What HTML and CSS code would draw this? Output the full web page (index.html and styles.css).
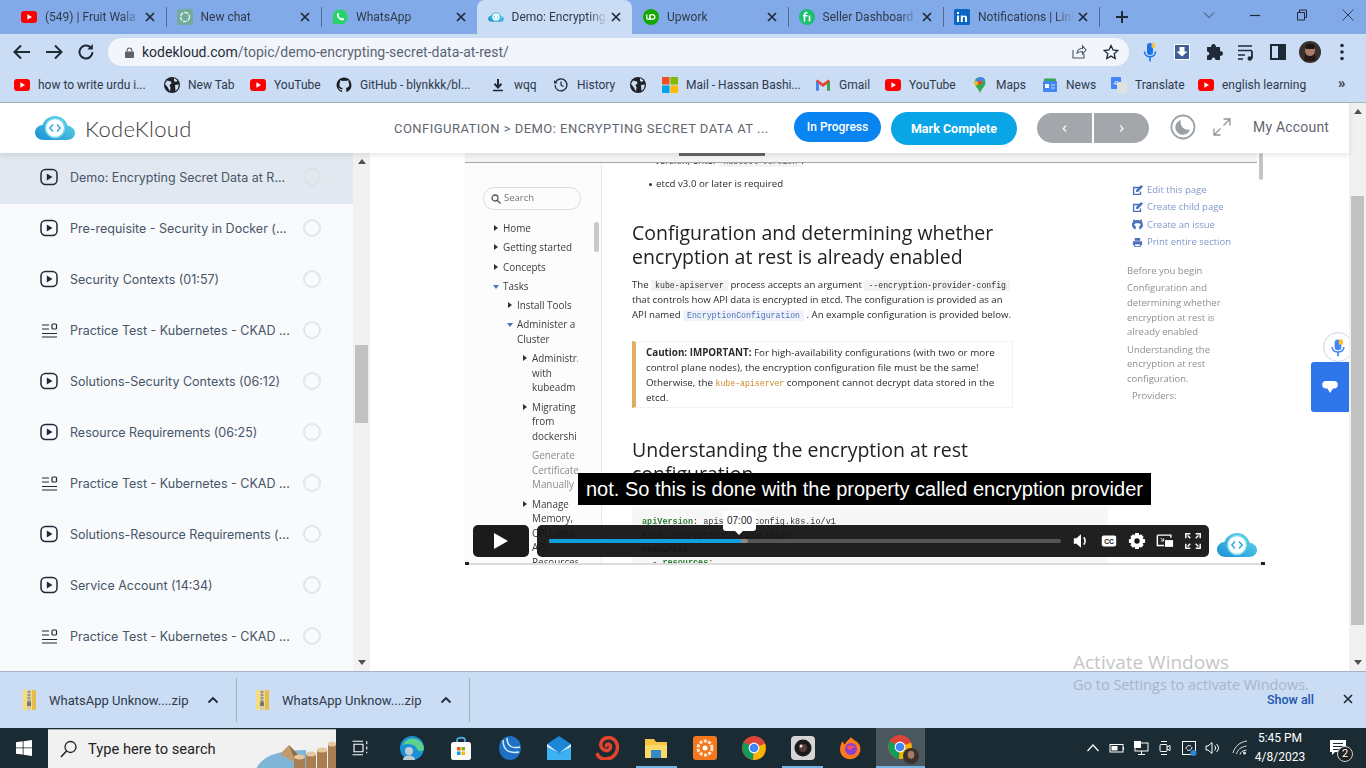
FILE: index.html
```html
<!DOCTYPE html>
<html lang="en">
<head>
<meta charset="utf-8">
<title>Demo: Encrypting Secret Data at Rest</title>
<link rel="stylesheet" href="styles.css">
</head>
<body>
<svg class="defs" aria-hidden="true">
  <symbol id="yt" viewBox="0 0 16 16"><rect x="0" y="2" width="16" height="12" rx="3.2" fill="#f00"/><path d="M6.4 5.3v5.4L11 8z" fill="#fff"/></symbol>
  <symbol id="globe" viewBox="0 0 16 16"><circle cx="8" cy="8" r="8" fill="#202124"/><path d="M3 3.5l4 1 .5 2-2 1.500 1 2.500-.5 4L3.500 10 1 7zM10 1l3.500 2.500-1.500 1.500-2-1zM11 8l3.800-.5-.8 4-2.500 2.500z" fill="#cbdcf5"/></symbol>
  <symbol id="cloud" viewBox="0 0 40 24"><defs><linearGradient id="cg" x1="0" y1="1" x2="1" y2="0"><stop offset="0" stop-color="#1a8fd8"/><stop offset="1" stop-color="#62dbe8"/></linearGradient></defs><path d="M9 24C3.500 24 0 20.500 0 16.500S3 9.500 7.500 9C9.500 3.500 14.500 0 20 0c6 0 11 4 12.500 9.500C37 10.500 40 13.500 40 17s-3 7-8 7z" fill="url(#cg)"/><circle cx="20" cy="12" r="9.500" fill="#fff" stroke="#7fdbe9" stroke-width="1.500"/><path d="M18 8.500L14.800 12l3.200 3.500M22 8.500l3.200 3.500-3.200 3.500" fill="none" stroke="#27a5dd" stroke-width="1.400"/></symbol>
  <symbol id="play" viewBox="0 0 18 18"><rect x="1" y="1.500" width="16" height="15" rx="4.500" fill="none" stroke="#1e293b" stroke-width="1.500"/><path d="M6.800 5.500v7L12.500 9z" fill="#1e293b"/></symbol>
  <symbol id="test" viewBox="0 0 18 18"><path d="M2 4h7M2 8h7M2 12.500h15M2 16h15" stroke="#1e293b" stroke-width="1.200" fill="none"/><rect x="12" y="3" width="4.500" height="5" rx="1" fill="none" stroke="#1e293b" stroke-width="1.200"/></symbol>
  <symbol id="x" viewBox="0 0 10 10"><path d="M1 1l8 8M9 1l-8 8" stroke="#1f2a36" stroke-width="1.700" fill="none"/></symbol>
  <symbol id="zip" viewBox="0 0 15 20"><path d="M1 0h13v20H1z" fill="#f6dc7c"/><path d="M10 0h4v20h-4z" fill="#e6bd4a"/><path d="M5.500 0h3v20h-3z" fill="#c9c9c0"/><path d="M5.500 2h3M5.500 5h3M5.500 8h3M5.500 11h3" stroke="#666" stroke-width="1"/><rect x="5" y="12" width="4" height="4" fill="#777"/></symbol>
  <symbol id="chrome" viewBox="0 0 24 24"><circle cx="12" cy="12" r="12" fill="#db4437"/><path d="M12 12L1.600 6C-.6 11 .2 17 4 20.500c2 1.800 4.300 3 7 3.500z" fill="#0f9d58"/><path d="M12 12l11-4.500c1.800 5.500.5 11-3.800 14.300-2.300 1.700-5 2.300-8.200 2.200z" fill="#f4b400"/><circle cx="12" cy="12" r="5.400" fill="#fff"/><circle cx="12" cy="12" r="4.300" fill="#4285f4"/></symbol>
  <symbol id="edit" viewBox="0 0 12 12"><path d="M1 2h7v1.500H2.500v6h6V7H10v4H1z" fill="#4d72bd"/><path d="M4.500 5.500L10 0l2 2-5.500 5.500H4.500z" fill="#4d72bd"/></symbol>
</svg>

<header class="tabstrip">
  <div class="tab"><svg class="fav"><use href="#yt"/></svg><span class="tab-t">(549) | Fruit Wala</span><svg class="tab-x"><use href="#x"/></svg></div>
  <div class="tab sep"><svg class="fav" viewBox="0 0 16 16"><rect width="16" height="16" rx="3" fill="#74aa9c"/><circle cx="8" cy="8" r="4.500" fill="none" stroke="#e6f0ee" stroke-width="1.400" stroke-dasharray="4 1"/></svg><span class="tab-t">New chat</span><svg class="tab-x"><use href="#x"/></svg></div>
  <div class="tab sep"><svg class="fav" viewBox="0 0 16 16"><path d="M.5 15.500l1.100-4A7.500 7.500 0 1 1 4.600 14.500z" fill="#25d366"/><path d="M5.500 4.500c-1 1-.8 2.500.5 4.200s3 2.900 4.500 2.800c1 0 1.700-.9 1.700-1.700L10.500 8.700l-.9.900C8.400 9 7 7.700 6.500 6.500l.8-.9-.9-1.800z" fill="#fff"/></svg><span class="tab-t">WhatsApp</span><svg class="tab-x"><use href="#x"/></svg></div>
  <div class="tab tab-on"><svg class="fav"><use href="#cloud"/></svg><span class="tab-t">Demo: Encrypting Secret</span><svg class="tab-x"><use href="#x"/></svg></div>
  <div class="tab"><svg class="fav" viewBox="0 0 16 16"><circle cx="8" cy="8" r="8" fill="#14a800"/><path d="M3.800 5.500v3c0 2.500 3 2.500 3 0v-3M7 11V7c.3-2 4.800-2 4.800 1s-3.800 2.600-4.800 1" fill="none" stroke="#fff" stroke-width="1.300"/></svg><span class="tab-t">Upwork</span><svg class="tab-x"><use href="#x"/></svg></div>
  <div class="tab sep"><svg class="fav" viewBox="0 0 16 16"><circle cx="8" cy="8" r="8" fill="#1dbf73"/><path d="M5.500 12.500V6c0-2 1.500-2.500 3-2.300M4 6.800h4.500M10.500 6.500v6" fill="none" stroke="#fff" stroke-width="1.600"/></svg><span class="tab-t">Seller Dashboard</span><svg class="tab-x"><use href="#x"/></svg></div>
  <div class="tab sep"><svg class="fav" viewBox="0 0 16 16"><rect width="16" height="16" rx="1.500" fill="#0a66c2"/><path d="M3 6.500h2V13H3zM3 3h2v2H3zM6.800 6.500h2v1c1-1.600 4.200-1.600 4.200 1.300V13h-2V9.200c0-1.500-2.200-1.500-2.200 0V13h-2z" fill="#fff"/></svg><span class="tab-t">Notifications | LinkedIn</span><svg class="tab-x"><use href="#x"/></svg></div>
  <div class="newtab sep"><svg class="ic14" viewBox="0 0 14 14"><path d="M7 1v12M1 7h12" stroke="#1f2a36" stroke-width="2" fill="none"/></svg></div>
  <div class="winctl">
    <svg class="ic12" viewBox="0 0 12 12"><path d="M1 3.500L6 8.500l5-5" stroke="#33425a" fill="none"/></svg>
    <svg class="ic12" viewBox="0 0 12 12"><path d="M1 6.500h10" stroke="#1f2a36" fill="none" stroke-width="1.200"/></svg>
    <svg class="ic12" viewBox="0 0 12 12"><path d="M1.500 3.500h7v7.500h-7zM3.500 3.500V1h7v7.500H8.500" stroke="#1f2a36" fill="none"/></svg>
    <svg class="ic12" viewBox="0 0 12 12"><path d="M.5.500l11 11M11.500.500l-11 11" stroke="#33425a" fill="none"/></svg>
  </div>
</header>

<nav class="toolbar">
  <svg class="tb" viewBox="0 0 24 24"><path d="M20 12H5M11 5.500L4.500 12l6.500 6.500" fill="none" stroke="#1f2a36" stroke-width="2"/></svg>
  <svg class="tb" viewBox="0 0 24 24"><path d="M4 12h15M13 5.500l6.500 6.500-6.500 6.500" fill="none" stroke="#1f2a36" stroke-width="2"/></svg>
  <svg class="tb" viewBox="0 0 24 24"><path d="M18.500 12a6.500 6.500 0 1 1-2-4.700" fill="none" stroke="#1f2a36" stroke-width="2"/><path d="M18.800 4v5.500h-5.500z" fill="#1f2a36"/></svg>
  <div class="omni">
    <svg class="lock" viewBox="0 0 10 12"><path d="M2.500 5V3.500a2.500 2.500 0 0 1 5 0V5" fill="none" stroke="#5f6368" stroke-width="1.300"/><rect y="5" width="10" height="7" rx="1" fill="#5f6368"/></svg>
    <span class="url"><b>kodekloud.com</b>/topic/demo-encrypting-secret-data-at-rest/</span>
    <svg class="tb16" viewBox="0 0 16 16"><path d="M2 6v8h11v-4M6 9c.5-3 3-4.500 5.500-4.500V2L15 6l-3.500 4V7.500C9 7.500 7.500 8 6 9z" fill="none" stroke="#4b5563" stroke-width="1.100"/></svg>
    <svg class="tb16" viewBox="0 0 16 16"><path d="M8 1.500l2 4.500 4.800.5-3.600 3.200 1 4.800L8 12.100 3.800 14.500l1-4.800L1.200 6.500 6 6z" fill="none" stroke="#1f2a36" stroke-width="1.300"/></svg>
  </div>
  <div class="tb-right">
    <svg class="tb" viewBox="0 0 24 24"><rect x="9" y="3" width="6" height="12" rx="3" fill="#1a73e8"/><rect x="13.500" y="3" width="3.500" height="5" rx="1.500" fill="#fbc02d"/><path d="M6.500 11.500c0 7 11 7 11 0M12 17.500v4" fill="none" stroke="#1a73e8" stroke-width="1.600"/></svg>
    <svg class="tb" viewBox="0 0 24 24"><rect x="4.500" y="4.500" width="15" height="15" fill="#3f5f95" stroke="#fff"/><path d="M9.500 7h5v4.500H17.500L12 16.500 6.500 11.500h3z" fill="#fff"/></svg>
    <svg class="tb" viewBox="0 0 24 24"><path d="M5 7h4c0-4 5-4 5 0h4v4c4 0 4 5 0 5v4h-4.500c0-3.500-4-3.500-4 0H5v-4.500c3 0 3-4 0-4z" fill="#1f2a36"/></svg>
    <svg class="tb" viewBox="0 0 24 24"><path d="M4 6h14M4 10.500h14M4 15h7M4 19h5" stroke="#1f2a36" stroke-width="1.500" fill="none"/><path d="M18 11v7.500" stroke="#1f2a36" stroke-width="1.800"/><circle cx="15.800" cy="18.500" r="2.300" fill="#1f2a36"/></svg>
    <svg class="tb" viewBox="0 0 24 24"><rect x="5" y="5" width="14" height="14" fill="none" stroke="#1f2a36" stroke-width="2"/><rect x="12" y="5" width="7" height="14" fill="#1f2a36"/></svg>
    <svg class="tb" viewBox="0 0 24 24"><circle cx="12" cy="12" r="11" fill="#3b3230"/><ellipse cx="12" cy="10.500" rx="5" ry="6" fill="#a67c62"/><path d="M7 7c1-4.500 9-4.500 10 0l-1 2H8z" fill="#1c1512"/><path d="M7 13c1 4 9 4 10 0l1 8H6z" fill="#241b19"/></svg>
    <svg class="tb" viewBox="0 0 24 24"><circle cx="12" cy="5.500" r="1.800" fill="#1f2a36"/><circle cx="12" cy="12" r="1.800" fill="#1f2a36"/><circle cx="12" cy="18.500" r="1.800" fill="#1f2a36"/></svg>
  </div>
</nav>

<div class="bookmarks">
  <a class="bm"><svg class="bi"><use href="#yt"/></svg>how to write urdu i...</a>
  <a class="bm"><svg class="bi"><use href="#globe"/></svg>New Tab</a>
  <a class="bm"><svg class="bi"><use href="#yt"/></svg>YouTube</a>
  <a class="bm"><svg class="bi" viewBox="0 0 16 16"><path d="M8 .5a7.500 7.500 0 0 0-2.400 14.600c.4.100.5-.2.500-.4v-1.400c-2.100.5-2.500-1-2.500-1-.4-.9-.9-1.100-.9-1.100-.7-.5.100-.5.100-.5.800.100 1.200.8 1.200.8.700 1.200 1.800.8 2.300.6 0-.5.300-.9.500-1.100-1.700-.2-3.400-.8-3.400-3.700 0-.8.300-1.500.8-2-.1-.2-.3-1 .1-2 0 0 .6-.2 2.100.8a7 7 0 0 1 3.800 0c1.500-1 2.100-.8 2.100-.8.400 1 .2 1.800.1 2 .5.500.8 1.200.8 2 0 2.900-1.700 3.500-3.400 3.700.3.200.5.700.5 1.400v2.100c0 .2.100.5.500.4A7.500 7.500 0 0 0 8 .5z" fill="#1b1f23"/></svg>GitHub - blynkkk/bl...</a>
  <a class="bm"><svg class="bi" viewBox="0 0 16 16"><path d="M8 2v8M4.500 6.800L8 10.500l3.500-3.700" stroke="#1f2a36" stroke-width="2" fill="none"/><path d="M3 13.500h10" stroke="#1f2a36" stroke-width="1.500"/></svg>wqq</a>
  <a class="bm"><svg class="bi" viewBox="0 0 16 16"><path d="M2.500 5.500A6 6 0 1 1 2 8" fill="none" stroke="#1f2a36" stroke-width="1.300"/><path d="M1 3v3.500h3.500z" fill="#1f2a36"/><path d="M8 4.500V8l2.500 1.500" fill="none" stroke="#1f2a36" stroke-width="1.200"/></svg>History</a>
  <a class="bm"><svg class="bi"><use href="#globe"/></svg></a>
  <a class="bm"><svg class="bi" viewBox="0 0 16 16"><rect width="7.500" height="7.500" fill="#f25022"/><rect x="8.500" width="7.500" height="7.500" fill="#7fba00"/><rect y="8.500" width="7.500" height="7.500" fill="#00a4ef"/><rect x="8.500" y="8.500" width="7.500" height="7.500" fill="#ffb900"/></svg>Mail - Hassan Bashi...</a>
  <a class="bm"><svg class="bi" viewBox="0 0 16 16"><path d="M1 4v9.500h3V7l4 3 4-3v6.500h3V4l-1.500-1.500L8 6.500 2.500 2.500z" fill="#ea4335"/><path d="M1 4v9.500h3V7z" fill="#4285f4"/><path d="M15 4v9.500h-3V7z" fill="#34a853"/></svg>Gmail</a>
  <a class="bm"><svg class="bi"><use href="#yt"/></svg>YouTube</a>
  <a class="bm"><svg class="bi" viewBox="0 0 16 16"><path d="M8 0a5.500 5.500 0 0 0-5.500 5.500C2.500 9 6.500 11.500 8 16c1.500-4.500 5.500-7 5.500-10.500A5.500 5.500 0 0 0 8 0z" fill="#34a853"/><path d="M3 3.500L8 0c3 0 4.500 1.500 5 3L8 5.500z" fill="#4285f4"/><path d="M3 3.500L8 6 3.800 9c-1-1-1.600-3.500-.8-5.500z" fill="#fbbc04"/><circle cx="8" cy="5.500" r="2" fill="#ea4335"/></svg>Maps</a>
  <a class="bm"><svg class="bi" viewBox="0 0 16 16"><rect x="2" y="1.500" width="12" height="5" rx="1" fill="#34a853"/><rect x="1" y="4" width="14" height="11" rx="1" fill="#4285f4"/><path d="M3 7h4v4H3z" fill="#fff"/><path d="M9 8h4M9 11h4" stroke="#cbdcf5"/></svg>News</a>
  <a class="bm"><svg class="bi" viewBox="0 0 16 16"><rect width="10" height="12" rx="1" fill="#4285f4"/><rect x="6" y="5" width="10" height="11" rx="1" fill="#e0e0e0"/><path d="M3 7.500c.5-3.500 4-3 4-3M4 7h3" stroke="#fff" fill="none"/></svg>Translate</a>
  <a class="bm"><svg class="bi"><use href="#yt"/></svg>english learning</a>
  <span class="more">»</span>
</div>

<div class="page">
  <div class="page-main">
    <div class="sitehead">
      <div class="brand"><svg class="logo"><use href="#cloud"/></svg><span class="brandname">KodeKloud</span></div>
      <div class="crumb">CONFIGURATION &gt; DEMO: ENCRYPTING SECRET DATA AT ...</div>
      <button class="btn-prog">In Progress</button>
      <button class="btn-done">Mark Complete</button>
      <div class="pager"><span class="pg">‹</span><span class="pg">›</span></div>
      <svg class="moon" viewBox="0 0 26 26"><circle cx="13" cy="13" r="11.500" fill="none" stroke="#9aa0a6" stroke-width="1.800"/><path d="M11 6a7.500 7.500 0 1 0 9 9.500A7.500 7.500 0 0 1 11 6z" fill="#9aa0a6"/></svg>
      <svg class="expand" viewBox="0 0 18 18"><path d="M10.500 1H17v6.500M17 1L10.500 7.500M1 10.500V17h6.500M1 17l6.500-6.500" fill="none" stroke="#8d9499" stroke-width="1.300"/></svg>
      <div class="account">My Account</div>
    </div>
    <div class="body-row">
      <aside class="lessons">
        <ul class="lesson-list">
          <li class="lesson lesson-on"><svg class="l-ic"><use href="#play"/></svg><span class="l-t">Demo: Encrypting Secret Data at R...</span><i class="dot"></i></li>
          <li class="lesson"><svg class="l-ic"><use href="#play"/></svg><span class="l-t">Pre-requisite - Security in Docker (...</span><i class="dot"></i></li>
          <li class="lesson"><svg class="l-ic"><use href="#play"/></svg><span class="l-t">Security Contexts (01:57)</span><i class="dot"></i></li>
          <li class="lesson"><svg class="l-ic"><use href="#test"/></svg><span class="l-t">Practice Test - Kubernetes - CKAD ...</span><i class="dot"></i></li>
          <li class="lesson"><svg class="l-ic"><use href="#play"/></svg><span class="l-t">Solutions-Security Contexts (06:12)</span><i class="dot"></i></li>
          <li class="lesson"><svg class="l-ic"><use href="#play"/></svg><span class="l-t">Resource Requirements (06:25)</span><i class="dot"></i></li>
          <li class="lesson"><svg class="l-ic"><use href="#test"/></svg><span class="l-t">Practice Test - Kubernetes - CKAD ...</span><i class="dot"></i></li>
          <li class="lesson"><svg class="l-ic"><use href="#play"/></svg><span class="l-t">Solutions-Resource Requirements (...</span><i class="dot"></i></li>
          <li class="lesson"><svg class="l-ic"><use href="#play"/></svg><span class="l-t">Service Account (14:34)</span><i class="dot"></i></li>
          <li class="lesson"><svg class="l-ic"><use href="#test"/></svg><span class="l-t">Practice Test - Kubernetes - CKAD ...</span><i class="dot"></i></li>
        </ul>
        <div class="sb sb-side"><span class="sb-up"></span><span class="sb-thumb-side"></span><span class="sb-dn"></span></div>
      </aside>
      <main class="stage">
        <section class="video">
          <div class="frame">
            <div class="v-nav">
              <div class="v-search"><svg class="v-mag" viewBox="0 0 10 10"><circle cx="4" cy="4" r="3" fill="none" stroke="#555" stroke-width="1.300"/><path d="M6.200 6.200L9.500 9.500" stroke="#555" stroke-width="1.300"/></svg>Search</div>
              <ul class="v-tree">
                <li class="arr">Home</li>
                <li class="arr">Getting started</li>
                <li class="arr">Concepts</li>
                <li class="arr open">Tasks</li>
                <li class="arr l2">Install Tools</li>
                <li class="arr open l2">Administer a<br>Cluster</li>
                <li class="arr l3">Administr.<br>with<br>kubeadm</li>
                <li class="arr l3">Migrating<br>from<br>dockershi</li>
                <li class="l3 dim">Generate<br>Certificate<br>Manually</li>
                <li class="arr l3">Manage<br>Memory,<br>CPU, and<br>API<br>Resources</li>
              </ul>
              <span class="v-nav-sb"></span>
            </div>
            <article class="v-art">
              <p class="v-cut">version, enter <code>kubectl version</code>.</p>
              <ul class="v-ul"><li>etcd v3.0 or later is required</li></ul>
              <h1 class="v-h">Configuration and determining whether encryption at rest is already enabled</h1>
              <p class="v-p">The <code>kube-apiserver</code> process accepts an argument <code>--encryption-provider-config</code> that controls how API data is encrypted in etcd. The configuration is provided as an API named <code class="blue">EncryptionConfiguration</code> . An example configuration is provided below.</p>
              <div class="v-call"><b>Caution: IMPORTANT:</b> For high-availability configurations (with two or more control plane nodes), the encryption configuration file must be the same! Otherwise, the <code class="orange">kube-apiserver</code> component cannot decrypt data stored in the etcd.</div>
              <h2 class="v-h v-h2">Understanding the encryption at rest configuration</h2>
              <pre class="v-code"><span class="k">apiVersion</span>: apiserver.config.k8s.io/v1
<span class="k">kind</span>: EncryptionConfiguration
<span class="k">resources</span>:
  - <span class="k">resources</span>:</pre>
            </article>
            <div class="v-toc">
              <a class="v-link"><svg class="v-li"><use href="#edit"/></svg>Edit this page</a>
              <a class="v-link"><svg class="v-li"><use href="#edit"/></svg>Create child page</a>
              <a class="v-link"><svg class="v-li" viewBox="0 0 12 12"><path d="M4 11.500C1 10.500 0 8 0 6.500 0 4.800.5 3.800 1.200 3 1 2 1.200 1 1.500.5c1 0 1.800.5 2.500 1 1.300-.4 2.700-.4 4 0 .7-.5 1.500-1 2.500-1 .3.500.5 1.500.3 2.500.7.800 1.200 1.800 1.200 3.500 0 1.500-1 4-4 5V9c0-1.700-4-1.700-4 0z" fill="#4d72bd"/><path d="M2.500 6.500c0-1.300 1-1.800 3.500-1.800s3.500.5 3.500 1.800c0 1-1.500 1.500-3.500 1.500s-3.500-.5-3.500-1.500z" fill="#fff"/></svg>Create an issue</a>
              <a class="v-link"><svg class="v-li" viewBox="0 0 12 12"><path d="M3 1h6v3H3zM1 4.500h10V9H9.500v2h-7V9H1z" fill="#4d72bd"/><path d="M3.500 8h5v2h-5z" fill="#fff"/></svg>Print entire section</a>
              <div class="v-idx">
                <p>Before you begin</p>
                <p>Configuration and determining whether encryption at rest is already enabled</p>
                <p>Understanding the encryption at rest configuration.</p>
                <p class="ind">Providers:</p>
              </div>
            </div>
            <span class="v-sb"></span>
          </div>
          <div class="frame-top"><span class="frame-tab"></span></div>
          <div class="frame-bottom"></div>
          <div class="caption">not. So this is done with the property called encryption provider</div>
          <div class="controls">
            <button class="play-btn"><svg class="pl" viewBox="0 0 16 18"><path d="M1 1v16l14-8z" fill="#fff"/></svg></button>
            <div class="cbar">
              <div class="track"><span class="buffered"></span><span class="played"></span></div>
              <svg class="ci" viewBox="0 0 20 20"><path d="M2 7v6h3l5 4.500v-15L5 7z" fill="#fff"/><path d="M13 6c2 2 2 6 0 8" stroke="#fff" stroke-width="1.800" fill="none"/></svg>
              <svg class="ci" viewBox="0 0 20 20"><rect x="2" y="4" width="16" height="12" rx="2" fill="#fff"/><text x="10" y="12.800" class="cc">CC</text></svg>
              <svg class="ci" viewBox="0 0 20 20"><path d="M8 1h4l.5 2.500 2-.9 2.800 2.800-1 2.100L19 8v4l-2.700.5 1 2.100-2.800 2.800-2-.9L12 19H8l-.5-2.500-2 .9-2.800-2.800 1-2.100L1 12V8l2.700-.5-1-2.100 2.800-2.800 2 .9z" fill="#fff"/><circle cx="10" cy="10" r="3" fill="#161616"/></svg>
              <svg class="ci" viewBox="0 0 20 20"><path d="M1.500 3.500h15v3M9 15H1.500V3.500" fill="none" stroke="#fff" stroke-width="1.600"/><rect x="10" y="9" width="9" height="7.500" fill="#fff"/><path d="M5 6.500l3 3M5.500 10H8.500V7" stroke="#fff" fill="none"/></svg>
              <svg class="ci" viewBox="0 0 20 20"><path d="M2 7V2h5M4 4l3 3M13 2h5v5M16 4l-3 3M2 13v5h5M4 16l3-3M18 13v5h-5M16 16l-3-3" stroke="#fff" stroke-width="1.600" fill="none"/></svg>
            </div>
            <svg class="v-brand"><use href="#cloud"/></svg>
          </div>
          <div class="tip">07:00</div>
        </section>
        <div class="voice"><svg class="voice-ic" viewBox="0 0 24 24"><rect x="8" y="3" width="8" height="13" rx="4" fill="#4285f4"/><path d="M13 3h5v6h-5z" fill="#fbc02d"/><path d="M5 12c0 8 14 8 14 0M12 19v4" fill="none" stroke="#4285f4" stroke-width="2"/></svg></div>
        <div class="chat"><svg class="chat-ic" viewBox="0 0 16 14"><path d="M4 1h8a3.500 3.500 0 0 1 0 7.500h-1L8 13l-2.500-4.500H4A3.500 3.500 0 0 1 4 1z" fill="#fff"/></svg></div>
      </main>
    </div>
  </div>
  <div class="sb sb-page"><span class="sb-up"></span><span class="sb-thumb-page"></span><span class="sb-dn"></span></div>
</div>

<footer class="downloads">
  <div class="dl"><svg class="zip"><use href="#zip"/></svg><span class="dl-t">WhatsApp Unknow....zip</span><svg class="dl-c" viewBox="0 0 12 8"><path d="M1.500 6.500L6 2l4.500 4.500" fill="none" stroke="#1f2a36" stroke-width="1.800"/></svg></div>
  <div class="dl"><svg class="zip"><use href="#zip"/></svg><span class="dl-t">WhatsApp Unknow....zip</span><svg class="dl-c" viewBox="0 0 12 8"><path d="M1.500 6.500L6 2l4.500 4.500" fill="none" stroke="#1f2a36" stroke-width="1.800"/></svg></div>
  <a class="showall">Show all</a>
  <svg class="dl-x"><use href="#x"/></svg>
</footer>

<div class="taskbar">
  <div class="start"><svg class="win" viewBox="0 0 16 16"><path d="M0 2.300L6.700 1.300v6.200H0zM7.500 1.200L16 0v7.500H7.500zM0 8.300h6.700v6.300L0 13.700zM7.500 8.300H16V16l-8.500-1.200z" fill="#fff"/></svg></div>
  <div class="search">
    <svg class="s-mag" viewBox="0 0 18 18"><circle cx="10.500" cy="7" r="5.500" fill="none" stroke="#222" stroke-width="1.300"/><path d="M6.500 11L1 17" stroke="#222" stroke-width="1.500"/></svg>
    <span class="s-t">Type here to search</span>
    <svg class="s-art" viewBox="0 0 80 39"><path d="M0 39C6 26 22 20 50 20v19z" fill="#7fb6d8"/><path d="M24 24l9-9 11 12-6 5z" fill="#c49a6c"/><path d="M33 15l11 12-5 3z" fill="#8d6a43"/><g fill="#a87e52"><rect x="38" y="27" width="11" height="12"/><rect x="50" y="24" width="10" height="15"/><rect x="61" y="20" width="10" height="19"/><rect x="72" y="14" width="8" height="25"/></g><g fill="#e3c8a0"><ellipse cx="43.500" cy="27" rx="5.500" ry="2.500"/><ellipse cx="55" cy="24" rx="5" ry="2.500"/><ellipse cx="66" cy="20" rx="5" ry="2.500"/><ellipse cx="76" cy="14" rx="4" ry="2.500"/></g></svg>
  </div>
  <div class="apps">
    <span class="app app-tv"><svg class="a-tv" viewBox="0 0 24 24"><path d="M2 3h14M2 21h14M4 7h12v10H4zM21 3v4M21 10v4M21 17v2" stroke="#fff" stroke-width="1.500" fill="none"/></svg></span>
    <span class="app"><svg class="a-ic" viewBox="0 0 24 24"><circle cx="12" cy="12" r="12" fill="#1a91d4"/><path d="M3 9c3-9 18-9 21 3 0 4-6 4-7 1 0-3-7-7-14-4z" fill="#5ed18c"/><circle cx="9" cy="15" r="4" fill="#c0ccd4"/><path d="M3 24c0-6 12-6 12 0z" fill="#c0ccd4"/></svg></span>
    <span class="app"><svg class="a-ic" viewBox="0 0 24 24"><path d="M8 7V4c0-3 8-3 8 0v3" fill="none" stroke="#3fa9e0" stroke-width="1.800"/><rect x="2" y="6" width="20" height="18" rx="2.500" fill="#fafafa"/><path d="M8 11h3.500v3.500H8z" fill="#f25022"/><path d="M12.500 11H16v3.500h-3.500z" fill="#7fba00"/><path d="M8 15.500h3.500V19H8z" fill="#00a4ef"/><path d="M12.500 15.500H16V19h-3.500z" fill="#ffb900"/></svg></span>
    <span class="app"><svg class="a-ic" viewBox="0 0 24 24"><ellipse cx="12" cy="12" rx="11" ry="12" fill="#1f6fc4"/><path d="M5 4c0 10 6 14 16 12M9 2c0 8 5 11 13 9" fill="none" stroke="#d5ecfb" stroke-width="1.500"/></svg></span>
    <span class="app"><svg class="a-ic" viewBox="0 0 24 24"><path d="M0 8L12 0l12 8v16H0z" fill="#1c86d8"/><path d="M0 8l12 9 12-9v3l-12 6-12-6z" fill="#e8f4fc"/><path d="M0 11l12 7 12-7v13H0z" fill="#3cb2f3"/></svg></span>
    <span class="app"><svg class="a-ic" viewBox="0 0 24 24"><path d="M2 17c2 8 14 8 19 0 4-8-1-17-10-15C5 4 4 11 9 14c4 2 8-2 6-5-2-2-5 0-3 2" fill="none" stroke="#e4442e" stroke-width="3.500"/></svg></span>
    <span class="app app-run"><svg class="a-ic" viewBox="0 0 24 24"><path d="M1 3h9l2 3h11v16H1z" fill="#f7c443"/><path d="M1 9h22v13H1z" fill="#fbd868"/><rect x="7" y="14" width="10" height="8" fill="#3a87c8"/></svg></span>
    <span class="app"><svg class="a-ic" viewBox="0 0 24 24"><rect width="24" height="24" rx="3" fill="#f4761d"/><circle cx="12" cy="12" r="7" fill="none" stroke="#ffe9d6" stroke-width="3" stroke-dasharray="3 1.500"/><circle cx="12" cy="12" r="2.500" fill="#fff"/></svg></span>
    <span class="app"><svg class="a-ic"><use href="#chrome"/></svg></span>
    <span class="app app-run"><svg class="a-ic" viewBox="0 0 24 24"><rect width="24" height="24" rx="4" fill="#d5d5d5"/><circle cx="12" cy="12" r="8.500" fill="#1a1a1a"/><circle cx="12" cy="12" r="4" fill="#5b3a3a"/><circle cx="10" cy="10" r="1.500" fill="#e8e8e8"/></svg></span>
    <span class="app"><svg class="a-ic" viewBox="0 0 24 24"><path d="M12 1c1 2.500 5 3 8 7 3 5 1 12-5 14.500-7 2.500-14-2-14-9.500C1 9 3 6 4 5c0 2 1 3 2 3.500C7 5 10 4 12 1z" fill="#ff7a1a"/><circle cx="12" cy="13" r="6" fill="#8a3fd1"/><path d="M8 11c2-2 7-2 9 1-3-1-5 0-5 2-2 0-4-1-4-3z" fill="#ff4f5e"/></svg></span>
    <span class="app app-on"><svg class="a-ic"><use href="#chrome"/></svg><svg class="a-badge" viewBox="0 0 24 24"><circle cx="12" cy="12" r="12" fill="#3b3230"/><ellipse cx="12" cy="10" rx="5" ry="6" fill="#a67c62"/></svg></span>
  </div>
  <div class="tray">
    <svg class="tr" viewBox="0 0 16 16"><path d="M2.500 11L8 5l5.500 6" fill="none" stroke="#fff" stroke-width="1.200"/></svg>
    <svg class="tr" viewBox="0 0 16 16"><rect x="1" y="4.500" width="13" height="7.500" fill="none" stroke="#fff"/><rect x="2.500" y="6" width="6" height="4.500" fill="#fff"/><path d="M14.500 7v3" stroke="#fff"/></svg>
    <svg class="tr" viewBox="0 0 16 16"><rect x="2" y="3" width="13" height="8" fill="none" stroke="#fff"/><rect x="1" y="1" width="7" height="7" fill="#fff"/><path d="M8.500 11v3M5 14.500h7" stroke="#fff"/></svg>
    <svg class="tr" viewBox="0 0 16 16"><rect x="3" y="4.500" width="7" height="7" rx="1" fill="none" stroke="#fff"/><path d="M10 7l3-1.500v5L10 9M4 1.500h6M4 14.500h6" stroke="#fff" fill="none"/></svg>
    <svg class="tr" viewBox="0 0 16 16"><rect x="1.500" y="1.500" width="13" height="13" fill="none" stroke="#fff"/><path d="M5 9c0-3 3-4 5-3M11 7c0 3-3 4-5 3" stroke="#fff" fill="none"/><circle cx="12.500" cy="13" r="3" fill="#2f87d8"/></svg>
    <svg class="tr" viewBox="0 0 16 16"><path d="M1 6v4h2l4 3.500v-11L3 6z" fill="none" stroke="#fff"/><path d="M9.500 5.500c1.500 1.500 1.500 3.500 0 5M11.500 4c2.500 2.500 2.500 5.500 0 8" stroke="#fff" fill="none"/></svg>
    <svg class="tr tr-wifi" viewBox="0 0 16 16"><path d="M1 13C3 6 8 2 15 1M4.500 14c1-4 4-7 10-8M8 14.500c.5-2.500 2.500-4 6.500-4.500" stroke="#dfe6ea" fill="none"/><circle cx="12.500" cy="13" r="1.500" fill="#dfe6ea"/></svg>
  </div>
  <div class="clock"><span>5:45 PM</span><span>4/8/2023</span></div>
  <div class="notify"><svg class="n-ic" viewBox="0 0 16 16"><path d="M0 0h16v12H5l-3 3v-3H0z" fill="#fff"/><path d="M3 3.500h10M3 6.500h10M3 9.500h7" stroke="#1a2b33"/></svg><span class="n-badge">2</span></div>
</div>

<div class="activate">
  <div class="act-1">Activate Windows</div>
  <div class="act-2">Go to Settings to activate Windows.</div>
</div>
</body>
</html>
```

FILE: styles.css
```css
* { box-sizing: border-box; }
html, body { margin: 0; padding: 0; }
body {
  width: 1366px; height: 768px; overflow: hidden; position: relative;
  display: flex; flex-direction: column;
  font-family: "Open Sans", "Liberation Sans", sans-serif;
  background: #fff; color: #222;
}
ul { list-style: none; margin: 0; padding: 0; }
p { margin: 0; }
.defs { position: absolute; width: 0; height: 0; }

/* tab strip */
.tabstrip { height: 34px; flex: none; background: #83aae8; display: flex; align-items: stretch; padding-left: 10px; }
.tab { width: 155.5px; position: relative; display: flex; align-items: center; padding: 0 11px 0 11px; font: 12px Roboto, "Open Sans", sans-serif; color: #2e3a4a; }
.sep::before { content: ""; position: absolute; left: 0; top: 7px; bottom: 7px; width: 1px; background: #4f6a8f; }
.tab-on { background: #cbdcf5; border-radius: 8px 8px 0 0; }
.fav { width: 16px; height: 16px; flex: none; }
.tab-t { flex: 1; margin-left: 8px; white-space: nowrap; overflow: hidden; -webkit-mask-image: linear-gradient(90deg, #000 80%, transparent); mask-image: linear-gradient(90deg, #000 80%, transparent); }
.tab-x { width: 10px; height: 10px; flex: none; margin-left: 4px; }
.newtab { position: relative; width: 46px; display: flex; align-items: center; justify-content: center; }
.ic14 { width: 14px; height: 14px; }
.winctl { flex: 1; display: flex; align-items: center; padding-left: 58px; gap: 34.500px; height: 30px; }
.ic12 { width: 12px; height: 12px; }

/* toolbar */
.toolbar { height: 35px; flex: none; background: #cbdcf5; display: flex; align-items: center; padding-left: 10px; gap: 8px; }
.tb { width: 24px; height: 24px; flex: none; }
.omni { width: 1021px; height: 28px; margin-left: 2px; margin-top: 1px; background: #f2f6fc; border-radius: 14px; display: flex; align-items: center; padding: 0 10px 0 17px; }
.lock { width: 9px; height: 11px; flex: none; }
.url { flex: 1; margin-left: 8px; font: 14px Roboto, "Open Sans", sans-serif; color: #5a6472; }
.url b { font-weight: 400; color: #1f2a36; }
.tb16 { width: 16px; height: 16px; margin-left: 16px; flex: none; }
.tb-right { display: flex; gap: 8px; margin-left: 1px; }

/* bookmarks */
.bookmarks { height: 34px; flex: none; background: #cbdcf5; border-bottom: 1px solid #a7b3c4; display: grid; grid-template-columns: 150px 86px 86px 154px 63px 77px 32px 153px 70px 87px 70px 69px 87px 108px; align-items: center; padding: 0 0 2px 14px; font: 12px Roboto, "Open Sans", sans-serif; color: #2e3a4a; position: relative; }
.bm { display: flex; align-items: center; gap: 8px; white-space: nowrap; }
.bi { width: 16px; height: 16px; flex: none; }
.more { position: absolute; left: 1338px; top: 5px; font-size: 15px; font-weight: 700; }

/* page */
.page { flex: 1; min-height: 0; display: flex; }
.page-main { flex: 1; min-width: 0; display: flex; flex-direction: column; }
.sitehead { height: 50px; flex: none; background: #fff; box-shadow: 0 2px 6px rgba(0,0,0,.10); display: flex; align-items: center; position: relative; z-index: 5; padding-left: 35px; }
.brand { display: flex; align-items: center; gap: 10px; width: 359px; }
.logo { width: 40px; height: 24px; }
.brandname { font: 300 22px Lato, sans-serif; color: #3c3c3c; letter-spacing: .3px; }
.crumb { width: 400px; font: 13px Roboto, "Open Sans", sans-serif; color: #5f6670; letter-spacing: .47px; white-space: nowrap; margin-top: 1px; }
.btn-prog { width: 87px; height: 30px; border: 0; padding: 0; border-radius: 15px; background: #0a84f0; color: #fff; font: 500 12px Roboto, sans-serif; margin-top: -3px; }
.btn-done { width: 126px; height: 33px; border: 0; padding: 0; margin-left: 10px; border-radius: 17px; background: #0aa5e6; color: #fff; font: 700 12.500px Roboto, sans-serif; }
.pager { display: flex; gap: 2px; margin-left: 20px; }
.pg { width: 55px; height: 30px; background: #a3a7ab; color: #fff; font-size: 17px; line-height: 28px; text-align: center; }
.pg:first-child { border-radius: 15px 0 0 15px; }
.pg:last-child { border-radius: 0 15px 15px 0; }
.moon { width: 26px; height: 26px; margin-left: 21px; margin-top: -3px; flex: none; }
.expand { width: 18px; height: 18px; margin-left: 17px; flex: none; margin-top: -3px; }
.account { margin-left: 22px; font: 14px Roboto, sans-serif; color: #5f6670; margin-top: -2px; letter-spacing: .2px; }

.body-row { flex: 1; min-height: 0; display: flex; }
.lessons { width: 370px; flex: none; display: flex; overflow: hidden; }
.lesson-list { width: 353px; background: #f8fafc; overflow: hidden; }
.lesson { height: 51px; display: flex; align-items: center; padding: 0 0 3px 40px; font: 12.500px Inter, sans-serif; color: #475569; }
.lesson-on { background: #e2e8f0; }
.l-ic { width: 18px; height: 18px; flex: none; }
.l-t { width: 233px; margin-left: 12px; white-space: nowrap; overflow: hidden; }
.dot { width: 18px; height: 18px; border: 2px solid #e2e6ea; border-radius: 50%; flex: none; }
.lesson-on .dot { border-color: #dbe1e8; }

.sb { background: #f1f1f1; width: 17px; flex: none; position: relative; display: flex; flex-direction: column; align-items: center; }
.sb-up, .sb-dn { position: absolute; left: 4.500px; width: 0; height: 0; border-left: 4px solid transparent; border-right: 4px solid transparent; }
.sb-up { top: 6px; border-bottom: 5px solid #505050; }
.sb-dn { bottom: 6px; border-top: 5px solid #505050; }
.sb-thumb-side { position: absolute; left: 2px; top: 192px; width: 13px; height: 78px; background: #c1c1c1; }
.sb-thumb-page { position: absolute; left: 2px; top: 93px; width: 13px; height: 429px; background: #c1c1c1; }

/* stage + video */
.stage { flex: 1; position: relative; background: #fff; padding-left: 95px; }
.video { position: relative; width: 800px; height: 412px; }
.frame { position: absolute; inset: 0; overflow: hidden; display: grid; grid-template-columns: 137px 525px 138px; background: #fff; filter: blur(.35px); }
.frame-top { position: absolute; left: 0; top: 0; width: 792px; height: 10px; background: #f4f4f4; border-bottom: 1.500px solid #a5a5a5; }
.frame-tab { display: block; width: 86px; height: 3px; margin-left: 214px; background: #666; }
.frame-bottom { position: absolute; left: 0; right: 0; bottom: 0; height: 2px; background: #dcdcdc; }
.frame-bottom::before, .frame-bottom::after { content: ""; position: absolute; bottom: 0; width: 4px; height: 3px; background: #222; }
.frame-bottom::before { left: 0; }
.frame-bottom::after { right: 0; }
.v-nav { position: relative; background: #fcfcfc; border-right: 1px solid #eaeaea; font-size: 9.900px; color: #3c3c3c; line-height: 14.600px; }
.v-search { margin: 34px 0 0 18px; width: 98px; height: 23px; border: 1px solid #d8dde2; border-radius: 11px; display: flex; align-items: center; padding-left: 7px; gap: 3px; color: #777; font-size: 9.500px; }
.v-mag { width: 10px; height: 10px; }
.v-tree { margin-top: 11px; white-space: nowrap; overflow: hidden; width: 113px; }
.v-tree li { margin-bottom: 4.700px; padding-left: 38px; position: relative; }
.v-tree li.l2 { padding-left: 52px; }
.v-tree li.l3 { padding-left: 67px; }
.v-tree .dim { color: #8c8c8c; }
.arr::before { content: ""; position: absolute; top: 4px; margin-left: -9px; border-left: 4px solid #333; border-top: 3px solid transparent; border-bottom: 3px solid transparent; }
.arr.open::before { top: 6px; margin-left: -10px; border-left: 3.500px solid transparent; border-right: 3.500px solid transparent; border-top: 4px solid #4d72bd; border-bottom: 0; }
.v-nav-sb { position: absolute; left: 129px; top: 69px; width: 5px; height: 30px; background: #c9c9c9; border-radius: 3px; }

.v-art { padding-left: 30px; color: #2a2a2a; font-size: 9.630px; line-height: 14.600px; overflow: hidden; }
.v-cut { margin-top: 1px; padding-left: 23px; height: 15px; }
.v-ul { margin-top: 8px; padding-left: 24px; font-size: 9.700px; }
.v-ul li { position: relative; }
.v-ul li::before { content: ""; position: absolute; left: -7px; top: 6px; width: 3px; height: 3px; border-radius: 50%; background: #333; }
.v-h { margin: 0; font-weight: 400; font-size: 19.500px; line-height: 24px; color: #222; width: 385px; }
h1.v-h { margin-top: 29px; }
.v-p { margin-top: 9px; width: 382px; }
code { font-family: "Liberation Mono", monospace; font-size: 8.200px; background: #f3f3f3; padding: 1px 4px; color: #333; }
code.blue { color: #4d72bd; background: #f0f4fa; }
code.orange { color: #c98a2b; background: none; padding: 0; }
.v-cut code { color: #555; }
.v-call { margin-top: 18px; width: 381px; height: 67px; border: 1px solid #f3f3f3; border-left: 4px solid #e0ad63; padding: 4px 8px 0 10px; font-size: 9.800px; }
.v-h2 { margin-top: 30px; }
.v-code { margin: 21px 0 0; padding: 9px 0 0 10px; width: 476px; height: 60px; background: #f7f7f7; font: 8.500px/13.700px "Liberation Mono", monospace; color: #333; }
.v-code .k { color: #2e7d32; font-weight: 700; }

.v-toc { padding-top: 29px; font-size: 9.500px; color: #8f8f8f; line-height: 14.800px; }
.v-link { display: flex; align-items: center; gap: 4px; height: 17.200px; margin-left: 5px; color: #7f97c9; white-space: nowrap; }
.v-li { width: 11px; height: 11px; flex: none; }
.v-idx { margin-top: 13px; width: 100px; }
.v-idx p { margin-bottom: 2.400px; }
.v-idx .ind { padding-left: 5px; }
.v-sb { position: absolute; right: 2px; top: 0; width: 4px; height: 27px; background: #c4c4c4; border-radius: 2px; }

.caption { position: absolute; left: 113px; top: 320px; width: 573px; height: 32px; background: #000; color: #fff; font: 20px/32px "Liberation Sans", sans-serif; padding-left: 8px; white-space: nowrap; }
.controls { position: absolute; left: 8px; top: 372px; display: flex; align-items: flex-start; }
.play-btn { width: 56px; height: 32px; border: 0; padding: 0; border-radius: 5px; background: rgba(18,18,18,.96); display: flex; align-items: center; justify-content: center; }
.pl { width: 16px; height: 18px; }
.cbar { width: 672px; height: 32px; margin-left: 8px; background: rgba(18,18,18,.94); border-radius: 5px; display: flex; align-items: center; padding-left: 12px; }
.track { width: 512px; height: 4px; background: #555; border-radius: 2px; position: relative; margin-right: 11px; flex: none; }
.buffered { position: absolute; left: 0; top: 0; height: 4px; width: 199px; background: #888; border-radius: 2px; }
.played { position: absolute; left: 0; top: 0; height: 4px; width: 192px; background: #10a0e0; border-radius: 2px; }
.ci { width: 18px; height: 18px; margin-right: 10px; flex: none; }
.cc { font: 700 7.500px "Liberation Sans", sans-serif; fill: #161616; text-anchor: middle; }
.v-brand { width: 40px; height: 24px; margin: 8px 0 0 8px; }
.tip { position: absolute; left: 258px; top: 358px; width: 33px; height: 20px; background: #fff; border-radius: 3px; font: 10px/20px "Liberation Sans", sans-serif; text-align: center; color: #222; }
.tip::after { content: ""; position: absolute; left: 12px; top: 20px; border-left: 4px solid transparent; border-right: 4px solid transparent; border-top: 4px solid #fff; }

.voice { position: absolute; left: 953px; top: 179px; width: 30px; height: 30px; border-radius: 50%; border: 1px solid #c8d4e4; background: #fff; display: flex; align-items: center; justify-content: center; clip-path: inset(0 4px 0 0); }
.voice-ic { width: 20px; height: 20px; }
.chat { position: absolute; right: 0; top: 209px; width: 38px; height: 50px; background: #2f76ea; border-radius: 3px 0 0 3px; display: flex; align-items: center; justify-content: center; }
.chat-ic { width: 16px; height: 14px; }

/* downloads */
.downloads { height: 57px; flex: none; background: #cbdcf5; border-top: 1px solid #a7b3c4; display: flex; align-items: center; font: 13px Roboto, sans-serif; color: #2e3a4a; position: relative; }
.dl { width: 233px; height: 44px; display: flex; align-items: center; padding-left: 18px; border-right: 1px solid #9fb0c6; }
.dl:first-child { width: 237px; padding-left: 22px; }
.zip { width: 15px; height: 20px; flex: none; }
.dl-t { margin-left: 12px; width: 139px; white-space: nowrap; }
.dl-c { width: 12px; height: 8px; margin-left: 19px; }
.showall { margin-left: auto; color: #1a55b0; font-weight: 500; font-size: 12.500px; margin-right: 29px; margin-top: -2px; }
.dl-x { width: 10px; height: 10px; margin-right: 13px; margin-top: -2px; }

/* taskbar */
.taskbar { height: 40px; flex: none; background: #1a2b33; display: flex; align-items: center; position: relative; }
.start { width: 48px; display: flex; justify-content: center; }
.win { width: 16px; height: 16px; }
.search { width: 288px; height: 39px; margin-top: 1px; background: #f1f1f1; display: flex; align-items: center; padding-left: 12px; overflow: hidden; border-top: 1px solid #b5b5b5; }
.s-mag { width: 18px; height: 18px; flex: none; }
.s-t { margin-left: 10px; width: 168px; font: 14.700px Roboto, sans-serif; color: #222; white-space: nowrap; }
.s-art { width: 80px; height: 39px; flex: none; }
.apps { display: flex; align-items: stretch; height: 40px; padding-left: 3px; }
.app { width: 48.800px; height: 40px; display: flex; align-items: center; justify-content: center; position: relative; }
.a-ic { width: 24px; height: 24px; }
.a-tv { width: 18px; height: 18px; margin-left: -6px; }
.app-run::after { content: ""; position: absolute; left: 4px; right: 4px; bottom: 0; height: 2px; background: #77b4e6; }
.app-on { background: #4a575e; border-bottom: 2px solid #77b4e6; }
.a-badge { position: absolute; left: 27px; top: 20px; width: 16px; height: 16px; }
.tray { display: flex; gap: 8px; margin-left: auto; margin-right: 6px; }
.tr { width: 16px; height: 16px; }
.tr-wifi { margin-left: 3px; }
.clock { display: flex; flex-direction: column; align-items: center; font: 12px/19px Roboto, sans-serif; color: #fff; width: 52px; margin-right: 19px; }
.notify { position: relative; width: 30px; height: 30px; margin-right: 11px; }
.n-ic { position: absolute; left: 5px; top: 7px; width: 16px; height: 16px; }
.n-badge { position: absolute; left: 12px; top: 13px; width: 16px; height: 16px; border: 1px solid #d0d0d0; border-radius: 50%; background: #222; color: #fff; font: 11px/14px Roboto, sans-serif; text-align: center; }

.activate { position: absolute; left: 1073px; top: 650px; z-index: 20; pointer-events: none; white-space: nowrap; font-family: "Open Sans", sans-serif; }
.act-1 { font-size: 19px; line-height: 24px; color: #c6c6c6; }
.act-2 { font-size: 14.400px; line-height: 22px; color: #a9b5c6; }
```
